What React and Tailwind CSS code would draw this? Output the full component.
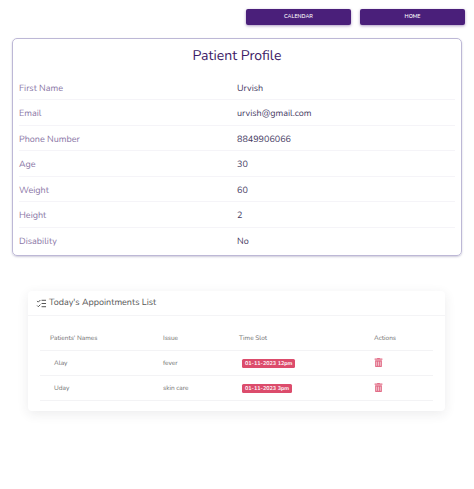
import { ListChecks } from 'lucide-react';
import { FaTrashAlt } from 'react-icons/fa';

const profile = [
    ['First Name', 'Urvish'],
    ['Email', 'urvish@gmail.com'],
    ['Phone Number', '8849906066'],
    ['Age', '30'],
    ['Weight', '60'],
    ['Height', '2'],
    ['Disability', 'No'],
];

const appointments = [
    { name: 'Alay', issue: 'fever', slot: '01-11-2023 12pm' },
    { name: 'Uday', issue: 'skin care', slot: '01-11-2023 3pm' },
];

const App = () => {
    return (
        <div className="w-[474px] h-[489px] overflow-hidden bg-white antialiased [text-rendering:geometricPrecision] font-['Nunito','Lato','Noto_Sans',sans-serif]">
            <div className="flex justify-end gap-[9px] pt-[9px] pr-[9px]">
                <button className="w-[105px] h-[16px] bg-[#4a1f7a] rounded-[2px] text-white text-[5.3px] font-semibold uppercase shadow-[0_1px_3px_rgba(74,31,122,0.45)]">
                    Calendar
                </button>
                <button className="w-[105px] h-[16px] bg-[#4a1f7a] rounded-[2px] text-white text-[5.3px] font-semibold uppercase shadow-[0_1px_3px_rgba(74,31,122,0.45)]">
                    Home
                </button>
            </div>

            <div className="mx-[12px] mt-[13px] h-[218px] border border-[#bdb8d6] rounded-[5px] shadow-[0_1px_2px_rgba(60,50,110,0.25)] px-[6px]">
                <h1 className="text-center text-[14px] leading-[20px] mt-[7px] text-[#3c1a66]">Patient Profile</h1>
                <div className="mt-[8.5px]">
                    {profile.map(([label, value], i) => (
                        <div
                            key={label}
                            className={`flex items-center h-[25.5px] pt-[5px] ${i < profile.length - 1 ? 'border-b border-[#f5f4f8]' : ''}`}
                        >
                            <span className="w-[218px] text-[9px] text-[#8a76a6]">{label}</span>
                            <span className="text-[9px] text-[#45395f]">{value}</span>
                        </div>
                    ))}
                </div>
            </div>

            <div className="mx-[28px] mt-[35px] w-[417px] h-[120px] rounded-[4px] bg-white shadow-[0_3px_12px_rgba(40,40,60,0.09)]">
                <div className="flex items-center gap-[2px] h-[25px] pl-[8px] pt-[1px] border-b border-[#f4f4f6]">
                    <ListChecks size={11} className="text-[#444]" strokeWidth={2} />
                    <span className="text-[9px] text-[#555]">Today's Appointments List</span>
                </div>
                <table className="ml-[12px] mt-[9px] w-[393px] table-fixed text-[6.5px] text-[#707070]">
                    <colgroup>
                        <col className="w-[123px]" />
                        <col className="w-[76px]" />
                        <col className="w-[135px]" />
                        <col className="w-[59px]" />
                    </colgroup>
                    <thead>
                        <tr className="h-[25px] border-b border-[#f3f3f5]">
                            <th className="pl-[10px] pt-[4px] text-left font-normal">Patients' Names</th>
                            <th className="pt-[4px] text-left font-normal">Issue</th>
                            <th className="pt-[4px] text-left font-normal">Time Slot</th>
                            <th className="pt-[4px] text-left font-normal">Actions</th>
                        </tr>
                    </thead>
                    <tbody>
                        {appointments.map((row) => (
                            <tr key={row.name} className="h-[25px] border-b border-[#f3f3f5]">
                                <td className="pl-[14px] pt-[2px]">{row.name}</td>
                                <td className="pt-[2px]">{row.issue}</td>
                                <td className="pl-[3px] pt-[3px]">
                                    <span className="inline-block px-[3px] h-[9px] leading-[9px] rounded-[1.5px] bg-[#dc4c6c] text-white text-[5.5px] font-bold">
                                        {row.slot}
                                    </span>
                                </td>
                                <td className="pb-[1px]">
                                    <FaTrashAlt size={9} className="text-[#e26d87]" />
                                </td>
                            </tr>
                        ))}
                    </tbody>
                </table>
            </div>
        </div>
    );
};

export default App;
